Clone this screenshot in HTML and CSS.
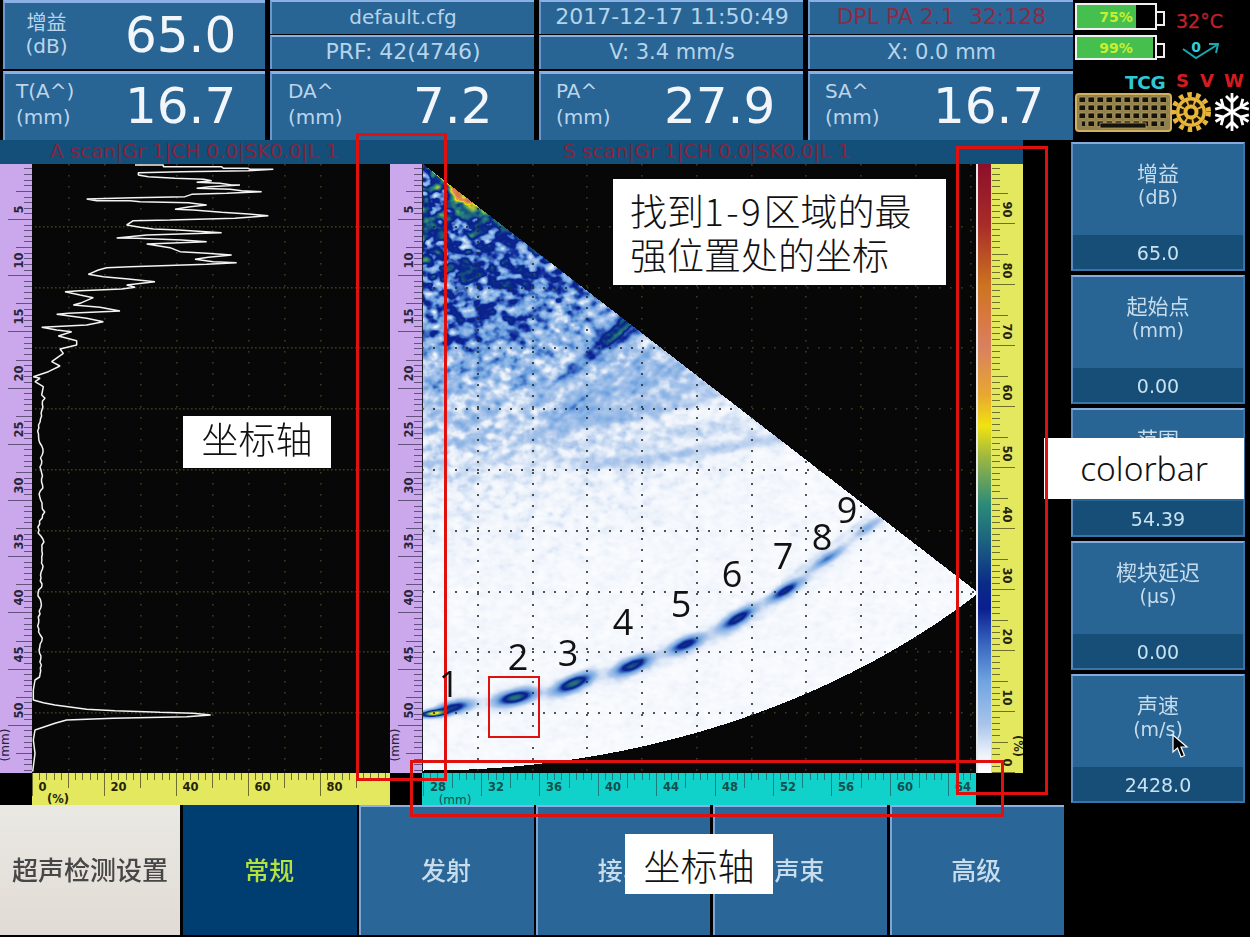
FILE: index.html
```html
<!DOCTYPE html>
<html lang="zh">
<head>
<meta charset="utf-8">
<title>超声检测设置</title>
<link rel="stylesheet" href="styles.css">
</head>
<body>
<div class="app">
  <header class="top">
    <div class="readouts">
      <div class="card"><div class="card-label card-label-center">增益<br>(dB)</div><div class="card-value">65.0</div></div>
      <div class="stack"><div class="sub sub-file">default.cfg</div><div class="sub sub-large">PRF: 42(4746)</div></div>
      <div class="stack"><div class="sub sub-large">2017-12-17 11:50:49</div><div class="sub">V: 3.4 mm/s</div></div>
      <div class="stack"><div class="sub sub-large sub-alert">DPL PA 2.1&nbsp;&nbsp;32:128</div><div class="sub">X: 0.0 mm</div></div>
      <div class="card"><div class="card-label">T(A^)<br>(mm)</div><div class="card-value">16.7</div></div>
      <div class="card"><div class="card-label card-label-wide">DA^<br>(mm)</div><div class="card-value">7.2</div></div>
      <div class="card"><div class="card-label card-label-inset">PA^<br>(mm)</div><div class="card-value">27.9</div></div>
      <div class="card"><div class="card-label card-label-inset">SA^<br>(mm)</div><div class="card-value">16.7</div></div>
    </div>
    <div class="status">
      <div class="status-row status-row-first">
        <div class="battery"><div class="battery-fill battery-fill-75"></div><span class="battery-text">75%</span></div>
        <span class="temp">32°C</span>
      </div>
      <div class="status-row status-row-second">
        <div class="battery battery-small"><div class="battery-fill battery-fill-99"></div><span class="battery-text">99%</span></div>
        <svg class="gauge" viewBox="0 0 40 22" width="40" height="22">
          <polyline points="2,9 15,18 36,5" class="gauge-line"/>
          <polyline points="28,4 37,4 35,13" class="gauge-line"/>
          <text x="15" y="12" class="gauge-text">0</text>
        </svg>
      </div>
      <div class="status-row status-row-flags">
        <span class="flag-tcg">TCG</span><span class="flag">S</span><span class="flag">V</span><span class="flag">W</span>
      </div>
      <div class="status-row status-row-icons">
        <svg class="keyboard" viewBox="0 0 97 39" width="97" height="39">
          <defs>
            <pattern id="keys" width="9" height="8" patternUnits="userSpaceOnUse" x="3" y="3">
              <rect x="1" y="1" width="6.6" height="5.6" rx="1" class="key"/>
            </pattern>
          </defs>
          <rect x="1" y="1" width="95" height="37" rx="3" class="kb-body"/>
          <rect x="3" y="3" width="91" height="24" fill="url(#keys)"/>
          <rect x="7" y="27" width="82" height="7" fill="url(#keys)"/>
          <rect x="25" y="30" width="46" height="5" class="key"/>
        </svg>
        <svg class="gear" viewBox="0 0 40 40" width="40" height="40">
          <circle cx="20" cy="20" r="17.5" class="gear-teeth"/>
          <circle cx="20" cy="20" r="15" class="gear-body"/>
          <circle cx="20" cy="20" r="9.5" class="gear-holes"/>
          <circle cx="20" cy="20" r="3.5" class="gear-hole"/>
        </svg>
        <svg class="flake" viewBox="-20 -20 40 40" width="40" height="40">
          <g class="flake-lines">
            <g><path d="M0 0V-19M-6 -16L0 -10L6 -16"/></g>
            <g transform="rotate(60)"><path d="M0 0V-19M-6 -16L0 -10L6 -16"/></g>
            <g transform="rotate(120)"><path d="M0 0V-19M-6 -16L0 -10L6 -16"/></g>
            <g transform="rotate(180)"><path d="M0 0V-19M-6 -16L0 -10L6 -16"/></g>
            <g transform="rotate(240)"><path d="M0 0V-19M-6 -16L0 -10L6 -16"/></g>
            <g transform="rotate(300)"><path d="M0 0V-19M-6 -16L0 -10L6 -16"/></g>
          </g>
        </svg>
      </div>
    </div>
  </header>

  <div class="middle">
    <main class="work">
      <div class="strip">
        <span class="strip-a">A scan|Gr 1|CH 0.0|SK0.0|L 1</span>
        <span class="strip-s">S scan|Gr 1|CH 0.0|SK0.0|L 1</span>
      </div>
      <div class="scans">
        <div class="ruler ruler-mm" data-ruler="mm"></div>
        <canvas id="ascan" class="plot" width="358" height="609"></canvas>
        <div class="ruler ruler-mm" data-ruler="mm"></div>
        <canvas id="sscan" class="plot" width="554" height="609"></canvas>
        <div class="colorbar"></div>
        <div class="ruler ruler-pct-v" data-ruler="pctv"></div>
      </div>
      <div class="bottom-rulers">
        <div class="ruler-gap"></div>
        <div class="ruler ruler-pct-h" data-ruler="pcth"></div>
        <div class="ruler-gap"></div>
        <div class="ruler ruler-x" data-ruler="x"></div>
      </div>
      <nav class="tabs">
        <div class="tab tab-title">超声检测设置</div>
        <div class="tab tab-active">常规</div>
        <div class="tab">发射</div>
        <div class="tab">接收</div>
        <div class="tab">声束</div>
        <div class="tab">高级</div>
      </nav>
    </main>
    <aside class="side">
      <div class="param"><div class="param-label"><span class="param-cjk">增益</span><br>(dB)</div><div class="param-value">65.0</div></div>
      <div class="param"><div class="param-label"><span class="param-cjk">起始点</span><br>(mm)</div><div class="param-value">0.00</div></div>
      <div class="param"><div class="param-label"><span class="param-cjk">范围</span><br>(mm)</div><div class="param-value">54.39</div></div>
      <div class="param"><div class="param-label"><span class="param-cjk">楔块延迟</span><br>(µs)</div><div class="param-value">0.00</div></div>
      <div class="param"><div class="param-label"><span class="param-cjk">声速</span><br>(m/s)</div><div class="param-value">2428.0</div></div>
    </aside>
  </div>

  <div class="note note-find">找到<span class="note-latin">1-9</span>区域的最<br>强位置处的坐标</div>
  <div class="note note-axis-left">坐标轴</div>
  <div class="note note-axis-bottom">坐标轴</div>
  <div class="note note-colorbar">colorbar</div>

  <div class="frame frame-yaxis"></div>
  <div class="frame frame-bar"></div>
  <div class="frame frame-xaxis"></div>
  <div class="frame frame-spot"></div>

  <span class="num num-1">1</span>
  <span class="num num-2">2</span>
  <span class="num num-3">3</span>
  <span class="num num-4">4</span>
  <span class="num num-5">5</span>
  <span class="num num-6">6</span>
  <span class="num num-7">7</span>
  <span class="num num-8">8</span>
  <span class="num num-9">9</span>

  <svg class="cursor" viewBox="0 0 18 26" width="18" height="26">
    <path d="M1 1V18L5.500 14L9 23L12.500 21.500L9 13L15 13Z" class="cursor-shape"/>
  </svg>
</div>
<script src="app.js"></script>
</body>
</html>
```
FILE: styles.css
```css
* { box-sizing: border-box; }
html, body { margin: 0; padding: 0; background: #000; }
body { font-family: "DejaVu Sans", "Noto Sans CJK SC", sans-serif; }
.app { position: relative; width: 1250px; height: 937px; overflow: hidden; background: #000; }

/* top */
.top { display: flex; height: 140px; }
.readouts { width: 1073px; padding-left: 3px; display: grid; grid-template-columns: 262px 264px 264px 265px; grid-template-rows: 69px 69px; column-gap: 5px; row-gap: 2px; }
.card { display: flex; align-items: center; background: #286595; border-top: 3px solid #8ab0e6; border-left: 2px solid #6c98cf; color: #c3d9ec; padding-bottom: 2px; }
.card-label { width: 120px; padding-left: 11px; font-size: 20px; line-height: 26px; color: #bdd5ea; padding-bottom: 4px; }
.card-label-wide { width: 141px; padding-left: 16px; }
.card-label-inset { width: 123px; padding-left: 15px; }
.card-label-center { text-align: center; padding: 0 37px 0 0; width: 120px; line-height: 23px; }
.card-value { font-size: 50px; line-height: 1; color: #f2f6fa; }
.stack { display: flex; flex-direction: column; gap: 1px; }
.sub { flex: 1; display: flex; align-items: center; justify-content: center; background: #286595; border-top: 2px solid #8ab0e6; border-left: 2px solid #6c98cf; font-size: 21px; color: #b6d4ea; padding-bottom: 3px; white-space: nowrap; }
.sub-file { font-size: 20px; }
.sub-large { font-size: 22px; }
.sub-alert { color: #8c2b45; }
.status { flex: 1; padding-left: 2px; }
.status-row { display: flex; align-items: center; }
.status-row-first { height: 27px; margin-top: 3px; }
.status-row-second { height: 25px; margin-top: 5px; }
.status-row-flags { height: 20px; margin-top: 12px; padding-left: 50px; }
.status-row-icons { height: 40px; margin-top: 0; }
.battery { position: relative; width: 82px; height: 27px; border: 2px solid #f0f0f0; margin-right: 8px; }
.battery-small { height: 25px; }
.battery::after { content: ""; position: absolute; right: -10px; top: 6px; width: 8px; height: 11px; border: 2px solid #f0f0f0; border-left: 0; }
.battery-fill { height: 100%; background: #45c04f; }
.battery-fill-75 { width: 76%; }
.battery-fill-99 { width: 98%; }
.battery-text { position: absolute; inset: 0; display: flex; align-items: center; justify-content: center; font-size: 14px; font-weight: bold; color: #c8ee2e; }
.temp { margin-left: 11px; padding-top: 9px; font-size: 19px; color: #c3202c; -webkit-text-stroke: .3px #c3202c; }
.gauge { margin-left: 16px; margin-top: 6px; }
.gauge-line { fill: none; stroke: #18a8b0; stroke-width: 2; }
.gauge-text { font-size: 14px; font-weight: bold; fill: #2fd0e0; text-anchor: middle; }
.flag-tcg { font-size: 18.500px; font-weight: bold; color: #2fc9d4; width: 51px; flex: none; letter-spacing: -.3px; }
.flag { font-size: 18px; font-weight: bold; color: #d71a20; width: 24px; position: relative; top: -2px; flex: none; }
.keyboard { flex: none; }
.kb-body { fill: #8e8052; stroke: #d1b160; stroke-width: 2; }
.key { fill: #15140c; stroke: #c7ab62; stroke-width: .7; }
.gear { flex: none; margin-left: -1px; }
.gear-teeth { fill: none; stroke: #e7b53a; stroke-width: 5; stroke-dasharray: 4.5 4.2; }
.gear-body { fill: #e7b53a; }
.gear-holes { fill: none; stroke: #1a1408; stroke-width: 4; stroke-dasharray: 5 2; }
.gear-hole { fill: #000; }
.flake { flex: none; margin-left: 1px; }
.flake-lines { fill: none; stroke: #fff; stroke-width: 2.800; }

/* middle */
.middle { display: flex; height: 797px; }
.work { width: 1071px; }
.strip { width: 1023px; height: 24px; background: #134f78; position: relative; font-size: 19.800px; line-height: 24px; color: #85243f; white-space: nowrap; display: flex; }
.strip-a { margin-left: 50px; width: 513px; }
.scans { display: flex; height: 609px; }
.plot { display: block; flex: none; background: #070707; }
.ruler { flex: none; overflow: hidden; }
.ruler svg { display: block; }
.ruler-mm { width: 32px; background: #cba8ec; }
.colorbar { flex: none; width: 15px; border-left: 2px solid #e8e8e8; background: linear-gradient(to top, #fff 0%, #eef3fb 3%, #a8c4ea 8%, #70a4e0 15%, #3a68c0 21%, #0a1f90 27%, #0a2a88 31%, #1a5a80 37%, #2a8a78 44%, #a0b840 52%, #f0e410 57%, #e8a830 62%, #d88060 70%, #d87840 75%, #cc7420 80%, #a82c28 90%, #8b1028 100%); }
.ruler-pct-v { width: 32px; background: #e4e85e; }
.bottom-rulers { display: flex; height: 32px; }
.ruler-gap { width: 32px; flex: none; }
.ruler-pct-h { width: 358px; background: #e4e85e; }
.ruler-x { width: 554px; background: #10d2ca; }
.tick { stroke: #6f6f2c; stroke-width: 1; shape-rendering: crispEdges; }
.ruler-mm .tick { stroke: #63537c; }
.ruler-x .tick { stroke: #1a7f7c; }
.rlabel { font-family: "DejaVu Sans", sans-serif; font-size: 11.500px; font-weight: bold; fill: #24240c; }
.ruler-mm .rlabel { fill: #2a2438; }
.ruler-x .rlabel { fill: #14504e; }
.runit { font-weight: normal; font-size: 12px; }

.tabs { display: flex; gap: 2.500px; width: 1064px; height: 130px; }
.tab { flex: 1; display: flex; align-items: center; justify-content: center; background: #2a6798; border-top: 2px solid #8ab0e6; border-left: 2px solid #7da5d8; font-size: 25px; color: #c8dcec; font-family: "Noto Sans CJK SC", sans-serif; font-weight: 500; padding: 0 3px 4px 0; }
.tab-title { flex: none; width: 180px; padding: 0 0 4px; font-size: 26px; background: linear-gradient(#e9e8e3, #e2dbd5); border: 0; color: #474747; white-space: nowrap; }
.tab-active { background: #003d70; border-color: #003d70; color: #b5e23f; }

.side { width: 174px; padding-top: 2px; display: flex; flex-direction: column; gap: 4px; }
.param { height: 129px; display: flex; flex-direction: column; background: #286595; border-top: 2px solid #86abdc; border-left: 2px solid #5f8dc2; border-right: 2px solid #3b74a6; border-bottom: 2px solid #3b74a6; }
.param-label { flex: 1; padding-top: 17px; text-align: center; font-size: 19px; line-height: 23px; color: #c6dcec; }
.param-cjk { font-family: "Noto Sans CJK SC", sans-serif; font-size: 21px; }
.param-value { height: 34px; background: #164e78; text-align: center; font-size: 19px; line-height: 36px; color: #c9e2f0; }

/* annotations over the screenshot */
.note { position: absolute; background: #fff; color: #111; font-family: "Noto Sans CJK SC", sans-serif; font-weight: 300; }
.note-find { left: 613px; top: 179px; width: 333px; height: 106px; padding: 9px 0 0 17px; font-size: 37px; line-height: 44px; white-space: nowrap; }
.note-latin { letter-spacing: 2.500px; }
.note-axis-left { left: 183px; top: 416px; width: 148px; height: 52px; text-align: center; font-size: 37px; line-height: 44px; }
.note-axis-bottom { left: 625px; top: 834px; width: 148px; height: 60px; text-align: center; font-size: 37px; line-height: 62px; }
.note-colorbar { left: 1044px; top: 438px; width: 200px; height: 61px; text-align: center; font-size: 33.500px; line-height: 60px; font-family: "Noto Sans", sans-serif; }
.frame { position: absolute; border: 3px solid #e0100f; }
.frame-yaxis { left: 356px; top: 133px; width: 91px; height: 648px; }
.frame-bar { left: 956px; top: 146px; width: 92px; height: 649px; }
.frame-xaxis { left: 410px; top: 760px; width: 594px; height: 57px; }
.frame-spot { left: 488px; top: 676px; width: 52px; height: 62px; border-width: 2px; }
.num { position: absolute; font-family: "Open Sans", sans-serif; font-size: 36px; line-height: 40px; color: #111; transform: translate(-50%, -50%); }
.num-1 { left: 449px; top: 684px; }
.num-2 { left: 518px; top: 657px; }
.num-3 { left: 568px; top: 653px; }
.num-4 { left: 623px; top: 622px; }
.num-5 { left: 681px; top: 604px; }
.num-6 { left: 732px; top: 574px; }
.num-7 { left: 783px; top: 556px; }
.num-8 { left: 822px; top: 537px; }
.num-9 { left: 847px; top: 510px; }
.cursor { position: absolute; left: 1172px; top: 734px; }
.cursor-shape { fill: #000; stroke: #fff; stroke-width: 1.200; }
```
FILE: app.js
```js
(function () {
  var NS = 'http://www.w3.org/2000/svg';

  function tick(x1, y1, x2, y2) {
    return '<line class="tick" x1="' + x1 + '" y1="' + y1 + '" x2="' + x2 + '" y2="' + y2 + '"/>';
  }
  function label(x, y, text, rot, anchor, cls) {
    var t = rot ? ' transform="rotate(' + rot + ' ' + x + ' ' + y + ')"' : '';
    return '<text class="rlabel ' + (cls || '') + '" x="' + x + '" y="' + y + '"' + t + ' text-anchor="' + (anchor || 'middle') + '">' + text + '</text>';
  }
  var builders = {
    mm: function () {
      var s = '';
      for (var i = 0; i <= 110; i++) {
        var y = Math.round(11.24 * (i / 2) - 1.2) + 0.5;
        if (y < 0 || y > 609) continue;
        var len = i % 10 === 0 ? 24 : i % 5 === 0 ? 16 : 8;
        s += tick(32 - len, y, 32, y);
        if (i % 10 === 0 && i > 0) {
          var gap = i === 10 ? 6 : 7;
          s += label(23, y - gap, String(i / 2), -90, 'start');
        }
      }
      s += label(9, 581, '(mm)', -90, 'middle', 'runit');
      return [32, 609, s];
    },
    pctv: function () {
      var s = '';
      for (var v = 0; v <= 99; v++) {
        var y = Math.round(609 - 6.1 * v) - 0.5;
        var len = v % 10 === 0 ? 24 : v % 5 === 0 ? 17 : 9;
        s += tick(1, y, len, y);
        if (v % 10 === 0) s += label(12, y - 6, String(v), 90, 'end');
      }
      s += label(23, 582, '(%)', 90, 'middle');
      return [32, 609, s];
    },
    pcth: function () {
      var s = '';
      for (var v = 0; v < 100; v += 2) {
        var x = Math.round(3.6 * v) + 0.5;
        var len = v % 20 === 0 ? 23 : v % 10 === 0 ? 15 : 7;
        s += tick(x, 0, x, len);
        if (v % 20 === 0) s += label(x + (v ? 14 : 10), 18, String(v), 0);
      }
      s += label(26, 30, '(%)', 0);
      return [358, 32, s];
    },
    x: function () {
      var s = '';
      for (var i = 0; i <= 76; i++) {
        var v = 28 + i / 2;
        var x = Math.round(0.6 + 14.6 * (v - 28)) + 0.5;
        var len = v % 4 === 0 ? 23 : v % 2 === 0 ? 15 : 7;
        s += tick(x, 0, x, len);
        if (v % 4 === 0) s += label(x + 14.5, 18, String(v), 0);
      }
      s += label(33, 31, '(mm)', 0, 'middle', 'runit');
      return [554, 32, s];
    }
  };
  document.querySelectorAll('[data-ruler]').forEach(function (el) {
    var r = builders[el.getAttribute('data-ruler')]();
    var svg = document.createElementNS(NS, 'svg');
    svg.setAttribute('width', r[0]);
    svg.setAttribute('height', r[1]);
    svg.innerHTML = r[2];
    el.appendChild(svg);
  });

  /* value noise */
  function hash(i, j) {
    var s = Math.sin(i * 127.1 + j * 311.7) * 43758.5453;
    return s - Math.floor(s);
  }
  function noise(x, y) {
    var i = Math.floor(x), j = Math.floor(y), f = x - i, g = y - j;
    f = f * f * (3 - 2 * f); g = g * g * (3 - 2 * g);
    var a = hash(i, j), b = hash(i + 1, j), c = hash(i, j + 1), d = hash(i + 1, j + 1);
    return a + (b - a) * f + (c - a) * g + (a - b - c + d) * f * g;
  }
  /* noise sampled on a rotated lattice, so the grid does not show */
  function rnoise(x, y, angle) {
    var c = Math.cos(angle), s = Math.sin(angle);
    return noise(x * c - y * s, x * s + y * c);
  }
  function lerpTable(t, x) {
    if (x <= t[0][0]) return t[0].slice(1);
    for (var i = 1; i < t.length; i++) {
      if (x <= t[i][0]) {
        var k = (x - t[i - 1][0]) / (t[i][0] - t[i - 1][0]), o = [];
        for (var c = 1; c < t[i].length; c++) o.push(t[i - 1][c] + (t[i][c] - t[i - 1][c]) * k);
        return o;
      }
    }
    return t[t.length - 1].slice(1);
  }
  var colors = [
    [0, 255, 255, 255], [3, 238, 243, 251], [8, 168, 196, 234], [15, 112, 164, 224], [21, 58, 104, 192],
    [27, 10, 31, 144], [31, 10, 42, 136], [37, 26, 90, 128], [44, 42, 138, 120], [52, 160, 184, 64],
    [57, 240, 228, 16], [62, 232, 168, 48], [70, 216, 128, 96], [75, 216, 120, 64], [80, 204, 116, 32],
    [90, 168, 44, 40], [100, 139, 16, 40]
  ];
  var lut = [];
  for (var li = 0; li <= 400; li++) lut.push(lerpTable(colors, li / 4));

  var envelope = [[0, 40], [0.09, 34], [0.16, 28], [0.25, 23], [0.33, 13], [0.42, 7], [0.55, 2.4], [0.7, 1.1], [1, 0.8]];

  var spots = [
    [433, 713, 52, 16, 3.5], [453, 707, 30, 22, 6], [515, 697, 38, 24, 7], [573, 683, 38, 24, 7],
    [632, 665, 33, 24, 7], [685, 644, 29, 22, 6.5], [737, 618, 30, 24, 6.5], [785, 590, 28, 22, 5.5],
    [827, 558, 16, 22, 4.5], [867, 527, 9, 20, 4.5]
  ];
  function curveY(x) {
    if (x <= spots[0][0]) return spots[0][1];
    for (var i = 1; i < spots.length; i++) {
      if (x <= spots[i][0]) {
        var k = (x - spots[i - 1][0]) / (spots[i][0] - spots[i - 1][0]);
        return spots[i - 1][1] + (spots[i][1] - spots[i - 1][1]) * k;
      }
    }
    return spots[spots.length - 1][1] - (x - spots[spots.length - 1][0]) * 0.75;
  }
  function gauss(d, w) { return Math.exp(-(d * d) / (2 * w * w)); }

  function band(x, y, yc, w, amp, x0, x1) {
    if (x < x0 || x > x1) return 0;
    var fade = Math.min(1, (x - x0) / 50) * Math.min(1, (x1 - x) / 30);
    return amp * fade * gauss(y - yc, w);
  }
  function soft(v, knee) { return v < knee ? v : knee + (v - knee) * 0.45; }

  function value(px, py) {
    var dx = px - 423, dy = py - 164;
    var u = dx / 785, w = dy / 606;
    var r = Math.sqrt(u * u + w * w);
    var th = Math.atan2(u, w) * 180 / Math.PI;
    var n = rnoise(px / 8 + 3, py / 6 + 7, 0.6) * 0.55 + rnoise(px / 5 + 21, py / 4.2 + 9, 1.7) * 0.3 + rnoise(px / 2.8 + 11, py / 2.4 + 5, 2.6) * 0.15;
    var e = lerpTable(envelope, r)[0];
    if (r < 0.2) e *= 1 + 0.3 * (1 - th / 45);
    var v = soft(e * Math.pow(n, 1.5) * 2.5, 24);
    /* near-field glow beside the upper edge */
    if (r < 0.24) {
      v += gauss(th - 45, 1.6) * (1 - r / 0.24) * 30;
      v += gauss(r - 0.075, 0.02) * gauss(th - 41, 3.6) * 42;
    }
    /* soft background texture */
    var fine = rnoise(px / 5 + 40, py / 3 + 9, 0.4);
    v += 0.3 + fine * 1.2;

    /* reverberation arcs */
    var rip = 0.82 + 0.18 * Math.sin((px + py * 1.1) * 0.55);
    var arcW = 4 + Math.max(0, px - 540) * 0.06;
    v += band(px, py, 330 + (620 - px) * 0.82, arcW, 28 * Math.pow(Math.min(1, Math.max(0, (px - 480) / 140)), 2.2), 480, 670) * rip;
    v += band(px, py, 352 + (650 - px) * 0.7, 3.5, 5, 520, 680) * rip;
    v += band(px, py, 364 + (677 - px) * 0.45, 8, 7, 540, 720) * rip;
    v += band(px, py, 384 + (700 - px) * 0.33, 5, 4, 520, 750);
    v += band(px, py, 401 + (690 - px) * 0.24, 4, 3.5, 560, 770);
    v += band(px, py, 463 - Math.max(0, px - 620) * 0.16, 4.5, 4.5, 540, 810);
    v += band(px, py, 445 - Math.max(0, px - 620) * 0.18, 6, 2.2, 600, 800);

    /* back wall streak */
    if (px < 900) {
      var cy = curveY(px);
      v += gauss(py - cy, 5) * (px > 700 ? 1.8 : 1.2);
      v += gauss(py - cy - 11, 4) * 1.8 * Math.max(0.3, 1 - Math.abs(px - 720) / 260);
      v += gauss(py - cy + 11, 3) * (px > 780 ? 2 : 0.4);
    }
    /* individual spots */
    for (var i = 0; i < spots.length; i++) {
      var s = spots[i];
      var slope = i === 0 ? -0.1 : (i < 3 ? -0.22 : (i < 6 ? -0.42 : -0.62));
      var ax = px - s[0], ay = py - s[1];
      var len = Math.sqrt(1 + slope * slope);
      var along = (ax + ay * slope) / len;
      var across = (ay - ax * slope) / len;
      v += s[2] * gauss(along, s[3] * 0.52) * gauss(across, s[4] * 0.62);
    }
    return v;
  }

  function dots(ctx, xs, rows, w, h, xStep, inside) {
    var put = function (x, y) {
      var on = inside(x, y);
      ctx.fillStyle = on ? 'rgba(36,44,40,0.8)' : '#3a3a1e';
      ctx.fillRect(x, y, on ? 2 : 1.6, on ? 2 : 1.6);
    };
    xs.forEach(function (x) {
      for (var y = 0; y < h; y += 11) put(x, y);
    });
    rows.forEach(function (y) {
      for (var x = xStep === 11 ? 0 : 3; x < w; x += xStep) put(x, y);
    });
  }
  var rows = [];
  for (var ri = 0; ri <= 8; ri++) rows.push(Math.round(225.7 + 60.8 * ri - 164));

  /* S scan */
  var sc = document.getElementById('sscan').getContext('2d');
  var W = 554, H = 609;
  var img = sc.createImageData(W, H);
  function inSector(px, py) {
    var dx = px - 423, dy = py - 164;
    if (dx < 0) return false;
    var u = dx / 785, w = dy / 606;
    return u * u + w * w <= 1 && u <= w;
  }
  for (var y = 0; y < H; y++) {
    for (var x = 0; x < W; x++) {
      var p = (y * W + x) * 4, px = x + 422, py = y + 164, c;
      if (inSector(px, py)) {
        var v = Math.max(0, Math.min(100, value(px, py)));
        c = lut[Math.round(v * 4)];
      } else {
        c = [7, 7, 7];
      }
      img.data[p] = c[0]; img.data[p + 1] = c[1]; img.data[p + 2] = c[2]; img.data[p + 3] = 255;
    }
  }
  sc.putImageData(img, 0, 0);
  sc.fillStyle = '#1b1b2a';
  sc.fillRect(0, 0, 1, 609);
  var sCols = [];
  for (var sj = 1; sj <= 10; sj++) sCols.push(sj * 54.75);
  dots(sc, sCols.map(Math.round), rows, W, H, 11, function (x, y) { return inSector(x + 422, y + 164); });

  /* A scan */
  var ac = document.getElementById('ascan').getContext('2d');
  ac.fillStyle = '#070707';
  ac.fillRect(0, 0, 358, 609);
  var aCols = [];
  for (var aj = 1; aj <= 9; aj++) aCols.push(aj * 36);
  dots(ac, aCols, rows, 358, 609, 4, function () { return false; });

  var z = [405,45, 490,45, 490,50, 665,50, 670,55, 745,55, 750,58, 820,58, 745,62, 545,65, 415,68, 415,75, 445,80, 525,85, 610,88, 635,92, 590,97, 660,100, 695,105, 720,105, 630,110, 590,115, 690,118, 725,122, 785,125, 680,130, 575,133, 555,140, 400,143, 260,147, 290,152, 390,152, 420,155, 565,158, 620,165, 570,170, 525,178, 580,180, 665,187, 745,192, 805,197, 705,205, 510,210, 400,212, 380,225, 420,232, 460,237, 535,240, 665,248, 440,255, 350,264, 410,265, 545,270, 620,275, 440,282, 510,293, 540,305, 620,310, 695,315, 625,322, 585,328, 640,335, 710,338, 620,343, 390,350, 320,353, 295,360, 265,373, 310,380, 385,387, 465,395, 380,405, 405,412, 365,417, 240,422, 195,425, 240,435, 280,443, 245,458, 220,465, 300,472, 360,483, 205,490, 170,493, 260,505, 310,515, 260,525, 125,532, 170,540, 215,545, 175,558, 230,572, 230,585, 180,597, 190,610, 155,635, 180,648, 145,665, 100,680, 120,685, 105,695, 130,710, 125,735, 135,745];
  var pts = [];
  for (var zi = 0; zi < z.length; zi += 2) pts.push([z[zi] / 3, z[zi + 1] / 3 + 150]);
  for (var wy = 401; wy < 680; wy += 3) {
    pts.push([36 + 8 * noise(wy / 9, 2.5) + 2 * hash(wy, 4), wy]);
  }
  var spike = [105,0, 100,30, 100,60, 130,68, 165,75, 260,88, 345,92, 480,97, 580,100, 632,105, 560,110, 340,115, 200,120, 165,130, 105,150, 100,180, 105,220, 98,275];
  for (var si = 0; si < spike.length; si += 2) pts.push([spike[si] / 3, 680 + spike[si + 1] / 3]);

  ac.strokeStyle = '#f4f4f4';
  ac.lineWidth = 1.5;
  ac.lineJoin = 'bevel';
  ac.beginPath();
  pts.forEach(function (q, i) {
    var qx = q[0] - 32, qy = q[1] - 164;
    if (i) ac.lineTo(qx, qy); else ac.moveTo(qx, qy);
  });
  ac.stroke();
})();
```
